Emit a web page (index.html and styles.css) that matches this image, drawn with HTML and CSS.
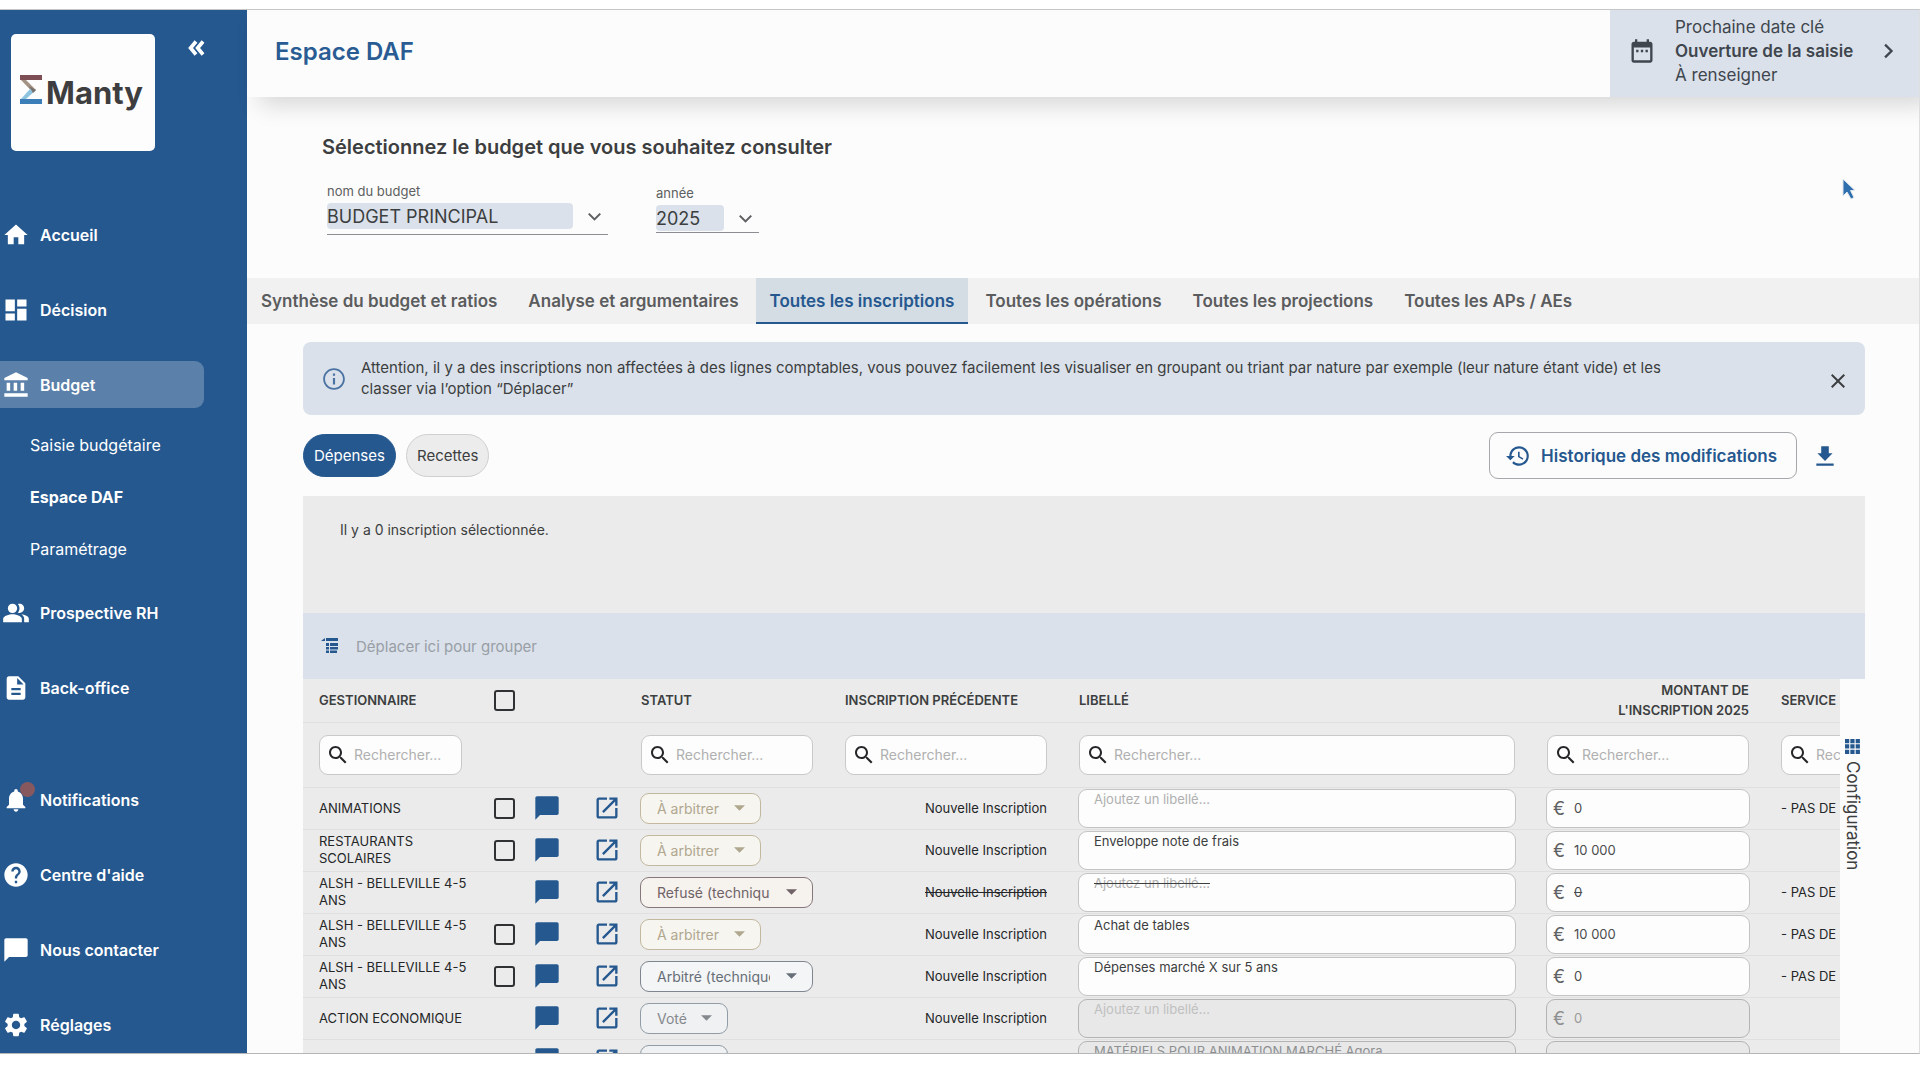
FILE: index.html
```html
<!DOCTYPE html>
<html lang="fr">
<head>
    <meta charset="UTF-8">
    <meta name="viewport" content="width=device-width, initial-scale=1.0">
    <title>Manty - Espace DAF</title>
    <link rel="stylesheet" href="styles.css">
</head>
<body>
    <!-- Icons -->
    <svg class="sprite" aria-hidden="true">
        <symbol id="i-home" viewBox="0 0 24 24"><path d="M10 20v-6h4v6h5v-8h3L12 3 2 12h3v8z"/></symbol>
        <symbol id="i-dashboard" viewBox="0 0 24 24"><path d="M3 13h8V3H3v10zm0 8h8v-6H3v6zm10 0h8V11h-8v10zm0-18v6h8V3h-8z"/></symbol>
        <symbol id="i-bank" viewBox="0 0 24 24"><path d="M4 10v7h3v-7H4zm6 0v7h3v-7h-3zM2 22h20v-3H2v3zm14-12v7h3v-7h-3zM12 1L2 6v2h20V6L12 1z"/></symbol>
        <symbol id="i-people" viewBox="0 0 24 24"><path d="M16.67 13.13C18.04 14.06 19 15.32 19 17v3h4v-3c0-2.18-3.57-3.47-6.33-3.87zM15 12c2.21 0 4-1.79 4-4s-1.79-4-4-4c-.47 0-.91.1-1.33.24C14.5 5.27 15 6.58 15 8s-.5 2.73-1.33 3.76c.42.14.86.24 1.33.24zM9 12a4 4 0 1 0 0-8 4 4 0 0 0 0 8zM9 13c-2.67 0-8 1.34-8 4v3h16v-3c0-2.66-5.33-4-8-4z"/></symbol>
        <symbol id="i-file" viewBox="0 0 24 24"><path d="M14 2H6c-1.1 0-1.99.9-1.99 2L4 20c0 1.1.89 2 1.99 2H18c1.1 0 2-.9 2-2V8l-6-6zm2 16H8v-2h8v2zm0-4H8v-2h8v2zm-3-5V3.5L18.5 9H13z"/></symbol>
        <symbol id="i-bell" viewBox="0 0 24 24"><path d="M12 22c1.1 0 2-.9 2-2h-4c0 1.1.89 2 2 2zm6-6v-5c0-3.07-1.64-5.64-4.5-6.32V4c0-.83-.67-1.5-1.5-1.5s-1.5.67-1.5 1.5v.68C7.63 5.36 6 7.92 6 11v5l-2 2v1h16v-1l-2-2z"/></symbol>
        <symbol id="i-help" viewBox="0 0 24 24"><path d="M12 2C6.48 2 2 6.48 2 12s4.48 10 10 10 10-4.48 10-10S17.52 2 12 2zm1 17h-2v-2h2v2zm2.07-7.75l-.9.92C13.45 12.9 13 13.5 13 15h-2v-.5c0-1.1.45-2.1 1.17-2.83l1.24-1.26c.37-.36.59-.86.59-1.41 0-1.1-.9-2-2-2s-2 .9-2 2H8c0-2.21 1.79-4 4-4s4 1.79 4 4c0 .88-.36 1.68-.93 2.25z"/></symbol>
        <symbol id="i-chat" viewBox="0 0 24 24"><path d="M20.500 2H3.500c-.8 0-1.500.7-1.500 1.500V22l4-4h14.500c.8 0 1.500-.7 1.500-1.500v-13c0-.8-.7-1.500-1.500-1.500z"/></symbol>
        <symbol id="i-settings" viewBox="0 0 24 24"><path d="M19.140 12.940c.04-.3.06-.61.06-.94 0-.32-.02-.64-.07-.94l2.030-1.580c.18-.14.23-.41.12-.61l-1.920-3.320c-.12-.22-.37-.29-.59-.22l-2.390.96c-.5-.38-1.030-.7-1.620-.94l-.36-2.540c-.04-.24-.24-.41-.48-.41h-3.840c-.24 0-.43.17-.47.41l-.36 2.540c-.59.24-1.130.57-1.620.94l-2.390-.96c-.22-.08-.47 0-.59.22L2.740 8.870c-.12.21-.08.47.12.61l2.030 1.580c-.05.3-.09.63-.09.94s.02.64.07.94l-2.030 1.580c-.18.14-.23.41-.12.61l1.920 3.320c.12.22.37.29.59.22l2.390-.96c.5.38 1.030.7 1.620.94l.36 2.540c.05.24.24.41.48.41h3.840c.24 0 .44-.17.47-.41l.36-2.540c.59-.24 1.130-.56 1.620-.94l2.390.96c.22.08.47 0 .59-.22l1.920-3.320c.12-.22.07-.47-.12-.61l-2.010-1.580zM12 15.600c-1.980 0-3.600-1.620-3.600-3.600s1.620-3.600 3.600-3.600 3.600 1.620 3.600 3.600-1.620 3.600-3.600 3.600z"/></symbol>
        <symbol id="i-open" viewBox="0 0 24 24"><path d="M19 19H5V5h7V3H5c-1.110 0-2 .9-2 2v14c0 1.100.89 2 2 2h14c1.100 0 2-.9 2-2v-7h-2v7zM14 3v2h3.590l-9.830 9.830 1.410 1.410L19 6.410V10h2V3h-7z"/></symbol>
        <symbol id="i-search" viewBox="0 0 24 24"><path d="M15.500 14h-.79l-.28-.27C15.410 12.590 16 11.110 16 9.500 16 5.910 13.090 3 9.500 3S3 5.910 3 9.500 5.910 16 9.500 16c1.610 0 3.090-.59 4.230-1.570l.27.28v.79l5 4.990L20.490 19l-4.990-5zm-6 0C7.010 14 5 11.990 5 9.500S7.010 5 9.500 5 14 7.010 14 9.500 11.990 14 9.500 14z"/></symbol>
        <symbol id="i-info" viewBox="0 0 24 24"><path d="M11 7h2v2h-2zm0 4h2v6h-2zm1-9C6.480 2 2 6.480 2 12s4.480 10 10 10 10-4.480 10-10S17.520 2 12 2zm0 18.300c-4.580 0-8.300-3.720-8.300-8.300S7.420 3.700 12 3.700s8.300 3.720 8.300 8.300-3.720 8.300-8.300 8.300z"/></symbol>
        <symbol id="i-close" viewBox="0 0 24 24"><path d="M19 6.410L17.590 5 12 10.590 6.410 5 5 6.410 10.590 12 5 17.590 6.410 19 12 13.410 17.590 19 19 17.590 13.410 12z"/></symbol>
        <symbol id="i-history" viewBox="0 0 24 24"><path d="M13 3c-4.970 0-9 4.030-9 9H1l3.890 3.890.07.14L9 12H6c0-3.870 3.130-7 7-7s7 3.130 7 7-3.130 7-7 7c-1.930 0-3.680-.79-4.940-2.060l-1.420 1.420C8.270 19.990 10.510 21 13 21c4.970 0 9-4.030 9-9s-4.030-9-9-9zm-1 5v5l4.280 2.540.72-1.210-3.500-2.080V8H12z"/></symbol>
        <symbol id="i-download" viewBox="0 0 24 24"><path d="M19 9.500h-3.500V3h-7v6.500H5l7 7 7-7zM4 19v2h16v-2H4z"/></symbol>
        <symbol id="i-calendar" viewBox="0 0 24 24"><path d="M19 4h-1V2h-2v2H8V2H6v2H5c-1.110 0-2 .9-2 2v14c0 1.100.89 2 2 2h14c1.100 0 2-.9 2-2V6c0-1.100-.9-2-2-2zm0 16H5V9h14v11zM7 11h2v2H7zm4 0h2v2h-2zm4 0h2v2h-2z"/></symbol>
        <symbol id="i-down" viewBox="0 0 24 24"><path d="M6 9l6 6 6-6" fill="none" stroke="currentColor" stroke-width="2.200"/></symbol>
        <symbol id="i-right" viewBox="0 0 24 24"><path d="M9.500 6.500L15 12l-5.500 5.500" fill="none" stroke="currentColor" stroke-width="2"/></symbol>
        <symbol id="i-collapse" viewBox="0 0 24 24"><path d="M12 6l-5 6 5 6M18.500 6l-5 6 5 6" fill="none" stroke="currentColor" stroke-width="3.400"/></symbol>
        <symbol id="i-caret" viewBox="0 0 12 6"><path d="M0 0h12L6 6z"/></symbol>
        <symbol id="i-group" viewBox="0 0 18 16"><path d="M0 3l4-3v3zM5 0h12v3H5zM5 5h3v3H5zM9 5h8v3H9zM5 9h3v2.500H5zM9 9h8v2.500H9zM5 12.500h3V15H5zM9 12.500h7V15H9z"/></symbol>
        <symbol id="i-grid" viewBox="0 0 16 16"><path d="M0 0h4.500v4.500H0zM5.700 0h4.500v4.500H5.700zM11.400 0h4.500v4.500h-4.500zM0 5.700h4.500v4.500H0zM5.700 5.700h4.500v4.500H5.700zM11.400 5.700h4.500v4.500h-4.500zM0 11.400h4.500v4.500H0zM5.700 11.400h4.500v4.500H5.700zM11.400 11.400h4.500v4.500h-4.500z"/></symbol>
    </svg>

    <div class="app">
        <aside class="sidebar">
            <div class="sidebar-top">
                <a class="logo" href="#">
                    <svg class="logo-mark" viewBox="0 0 22 30">
                        <path d="M0 0h22v5H0z" fill="#7d4f55"/>
                        <path d="M1 5h5l10 10-3 2.500z" fill="#a39384"/>
                        <path d="M16 15L6 24H1l9-10z" fill="#8fc4e0"/>
                        <path d="M9 11l7 4-3 3z" fill="#77706c"/>
                        <path d="M0 24h22v5H0z" fill="#3c7fb8"/>
                    </svg>
                    <span>Manty</span>
                </a>
                <button class="collapse" aria-label="Réduire le menu"><svg><use href="#i-collapse"/></svg></button>
            </div>
            <nav class="menu">
                <a class="menu-item" href="#"><svg><use href="#i-home"/></svg>Accueil</a>
                <a class="menu-item" href="#"><svg><use href="#i-dashboard"/></svg>Décision</a>
                <a class="menu-item active" href="#"><svg><use href="#i-bank"/></svg>Budget</a>
                <div class="submenu">
                    <a href="#">Saisie budgétaire</a>
                    <a class="current" href="#">Espace DAF</a>
                    <a href="#">Paramétrage</a>
                </div>
                <a class="menu-item" href="#"><svg><use href="#i-people"/></svg>Prospective RH</a>
                <a class="menu-item" href="#"><svg><use href="#i-file"/></svg>Back-office</a>
            </nav>
            <nav class="menu menu-bottom">
                <a class="menu-item" href="#"><svg><use href="#i-bell"/></svg><span class="badge"></span>Notifications</a>
                <a class="menu-item" href="#"><svg><use href="#i-help"/></svg>Centre d'aide</a>
                <a class="menu-item" href="#"><svg><use href="#i-chat"/></svg>Nous contacter</a>
                <a class="menu-item" href="#"><svg><use href="#i-settings"/></svg>Réglages</a>
            </nav>
        </aside>

        <main class="main">
            <header class="header">
                <h1>Espace DAF</h1>
                <a class="key-date" href="#">
                    <svg><use href="#i-calendar"/></svg>
                    <span class="key-date-text">
                        <span>Prochaine date clé</span>
                        <strong>Ouverture de la saisie</strong>
                        <span>À renseigner</span>
                    </span>
                    <svg><use href="#i-right"/></svg>
                </a>
            </header>

            <section class="budget">
                <h2>Sélectionnez le budget que vous souhaitez consulter</h2>
                <div class="fields">
                    <div class="field">
                        <label for="budget">nom du budget</label>
                        <div class="field-control">
                            <select id="budget"><option>BUDGET PRINCIPAL</option></select>
                            <svg><use href="#i-down"/></svg>
                        </div>
                    </div>
                    <div class="field field-year">
                        <label for="year">année</label>
                        <div class="field-control">
                            <select id="year"><option>2025</option></select>
                            <svg><use href="#i-down"/></svg>
                        </div>
                    </div>
                </div>
            </section>

            <nav class="tabs">
                <a href="#">Synthèse du budget et ratios</a>
                <a href="#">Analyse et argumentaires</a>
                <a class="active" href="#">Toutes les inscriptions</a>
                <a href="#">Toutes les opérations</a>
                <a href="#">Toutes les projections</a>
                <a href="#">Toutes les APs / AEs</a>
            </nav>

            <section class="content">
                <div class="alert">
                    <svg class="alert-icon"><use href="#i-info"/></svg>
                    <p>Attention, il y a des inscriptions non affectées à des lignes comptables, vous pouvez facilement les visualiser en groupant ou triant par nature par exemple (leur nature étant vide) et les classer via l’option “Déplacer”</p>
                    <button class="alert-close" aria-label="Fermer"><svg><use href="#i-close"/></svg></button>
                </div>

                <div class="toolbar">
                    <button class="pill selected">Dépenses</button>
                    <button class="pill">Recettes</button>
                    <button class="history"><svg><use href="#i-history"/></svg>Historique des modifications</button>
                    <button class="download" aria-label="Télécharger"><svg><use href="#i-download"/></svg></button>
                </div>

                <p class="selection">Il y a 0 inscription sélectionnée.</p>
                <div class="group-bar"><svg><use href="#i-group"/></svg>Déplacer ici pour grouper</div>

                <div class="grid">
                    <div class="grid-table">
                        <table>
                            <colgroup>
                                <col class="c-manager"><col class="c-check"><col class="c-chat"><col class="c-open"><col class="c-status">
                                <col class="c-previous"><col class="c-label"><col class="c-amount"><col class="c-service">
                            </colgroup>
                            <thead>
                                <tr class="titles">
                                    <th>GESTIONNAIRE</th>
                                    <th class="check"><input type="checkbox" aria-label="Tout sélectionner"></th>
                                    <th></th>
                                    <th></th>
                                    <th>STATUT</th>
                                    <th>INSCRIPTION PRÉCÉDENTE</th>
                                    <th>LIBELLÉ</th>
                                    <th class="right">MONTANT DE<br>L'INSCRIPTION 2025</th>
                                    <th>SERVICE</th>
                                </tr>
                                <tr class="filters">
                                    <td><label class="search"><svg><use href="#i-search"/></svg><input type="text" placeholder="Rechercher..." aria-label="Gestionnaire"></label></td>
                                    <td></td>
                                    <td></td>
                                    <td></td>
                                    <td><label class="search"><svg><use href="#i-search"/></svg><input type="text" placeholder="Rechercher..." aria-label="Statut"></label></td>
                                    <td><label class="search"><svg><use href="#i-search"/></svg><input type="text" placeholder="Rechercher..." aria-label="Inscription précédente"></label></td>
                                    <td><label class="search"><svg><use href="#i-search"/></svg><input type="text" placeholder="Rechercher..." aria-label="Libellé"></label></td>
                                    <td><label class="search"><svg><use href="#i-search"/></svg><input type="text" placeholder="Rechercher..." aria-label="Montant"></label></td>
                                    <td><label class="search"><svg><use href="#i-search"/></svg><input type="text" placeholder="Rechercher..." aria-label="Service"></label></td>
                                </tr>
                            </thead>
                            <tbody>
                                <tr>
                                    <td>ANIMATIONS</td>
                                    <td class="check"><input type="checkbox" aria-label="Sélectionner"></td>
                                    <td class="icon"><button aria-label="Commentaires"><svg><use href="#i-chat"/></svg></button></td>
                                    <td class="icon icon-open"><button aria-label="Ouvrir"><svg><use href="#i-open"/></svg></button></td>
                                    <td class="status-cell"><div class="status pending"><select aria-label="Statut"><option>À arbitrer</option></select><svg><use href="#i-caret"/></svg></div></td>
                                    <td class="right">Nouvelle Inscription</td>
                                    <td class="box-cell"><textarea class="box" rows="1" placeholder="Ajoutez un libellé..." aria-label="Libellé"></textarea></td>
                                    <td class="box-cell"><label class="box amount">€<input type="text" value="0"></label></td>
                                    <td>- PAS DE SERVICE -</td>
                                </tr>
                                <tr>
                                    <td>RESTAURANTS SCOLAIRES</td>
                                    <td class="check"><input type="checkbox" aria-label="Sélectionner"></td>
                                    <td class="icon"><button aria-label="Commentaires"><svg><use href="#i-chat"/></svg></button></td>
                                    <td class="icon icon-open"><button aria-label="Ouvrir"><svg><use href="#i-open"/></svg></button></td>
                                    <td class="status-cell"><div class="status pending"><select aria-label="Statut"><option>À arbitrer</option></select><svg><use href="#i-caret"/></svg></div></td>
                                    <td class="right">Nouvelle Inscription</td>
                                    <td class="box-cell"><textarea class="box" rows="1" aria-label="Libellé">Enveloppe note de frais</textarea></td>
                                    <td class="box-cell"><label class="box amount">€<input type="text" value="10 000"></label></td>
                                    <td></td>
                                </tr>
                                <tr class="refused">
                                    <td>ALSH - BELLEVILLE 4-5 ANS</td>
                                    <td></td>
                                    <td class="icon"><button aria-label="Commentaires"><svg><use href="#i-chat"/></svg></button></td>
                                    <td class="icon icon-open"><button aria-label="Ouvrir"><svg><use href="#i-open"/></svg></button></td>
                                    <td class="status-cell"><div class="status rejected"><select aria-label="Statut"><option>Refusé (technique)</option></select><svg><use href="#i-caret"/></svg></div></td>
                                    <td class="right">Nouvelle Inscription</td>
                                    <td class="box-cell"><textarea class="box" rows="1" placeholder="Ajoutez un libellé..." aria-label="Libellé"></textarea></td>
                                    <td class="box-cell"><label class="box amount">€<input type="text" value="0"></label></td>
                                    <td>- PAS DE SERVICE -</td>
                                </tr>
                                <tr>
                                    <td>ALSH - BELLEVILLE 4-5 ANS</td>
                                    <td class="check"><input type="checkbox" aria-label="Sélectionner"></td>
                                    <td class="icon"><button aria-label="Commentaires"><svg><use href="#i-chat"/></svg></button></td>
                                    <td class="icon icon-open"><button aria-label="Ouvrir"><svg><use href="#i-open"/></svg></button></td>
                                    <td class="status-cell"><div class="status pending"><select aria-label="Statut"><option>À arbitrer</option></select><svg><use href="#i-caret"/></svg></div></td>
                                    <td class="right">Nouvelle Inscription</td>
                                    <td class="box-cell"><textarea class="box" rows="1" aria-label="Libellé">Achat de tables</textarea></td>
                                    <td class="box-cell"><label class="box amount">€<input type="text" value="10 000"></label></td>
                                    <td>- PAS DE SERVICE -</td>
                                </tr>
                                <tr>
                                    <td>ALSH - BELLEVILLE 4-5 ANS</td>
                                    <td class="check"><input type="checkbox" aria-label="Sélectionner"></td>
                                    <td class="icon"><button aria-label="Commentaires"><svg><use href="#i-chat"/></svg></button></td>
                                    <td class="icon icon-open"><button aria-label="Ouvrir"><svg><use href="#i-open"/></svg></button></td>
                                    <td class="status-cell"><div class="status approved"><select aria-label="Statut"><option>Arbitré (technique)</option></select><svg><use href="#i-caret"/></svg></div></td>
                                    <td class="right">Nouvelle Inscription</td>
                                    <td class="box-cell"><textarea class="box" rows="1" aria-label="Libellé">Dépenses marché X sur 5 ans</textarea></td>
                                    <td class="box-cell"><label class="box amount">€<input type="text" value="0"></label></td>
                                    <td>- PAS DE SERVICE -</td>
                                </tr>
                                <tr>
                                    <td>ACTION ECONOMIQUE</td>
                                    <td></td>
                                    <td class="icon"><button aria-label="Commentaires"><svg><use href="#i-chat"/></svg></button></td>
                                    <td class="icon icon-open"><button aria-label="Ouvrir"><svg><use href="#i-open"/></svg></button></td>
                                    <td class="status-cell"><div class="status voted"><select aria-label="Statut"><option>Voté</option></select><svg><use href="#i-caret"/></svg></div></td>
                                    <td class="right">Nouvelle Inscription</td>
                                    <td class="box-cell"><textarea class="box locked" rows="1" placeholder="Ajoutez un libellé..." aria-label="Libellé" readonly></textarea></td>
                                    <td class="box-cell"><label class="box locked amount">€<input type="text" value="0" readonly></label></td>
                                    <td></td>
                                </tr>
                                <tr>
                                    <td></td>
                                    <td></td>
                                    <td class="icon"><button aria-label="Commentaires"><svg><use href="#i-chat"/></svg></button></td>
                                    <td class="icon icon-open"><button aria-label="Ouvrir"><svg><use href="#i-open"/></svg></button></td>
                                    <td class="status-cell"><div class="status voted"><select aria-label="Statut"><option></option></select><svg><use href="#i-caret"/></svg></div></td>
                                    <td></td>
                                    <td class="box-cell"><textarea class="box locked" rows="1" aria-label="Libellé" readonly>MATÉRIELS POUR ANIMATION MARCHÉ Agora</textarea></td>
                                    <td class="box-cell"><label class="box locked amount"><input type="text" readonly></label></td>
                                    <td></td>
                                </tr>
                            </tbody>
                        </table>
                    </div>
                    <button class="config"><svg><use href="#i-grid"/></svg>Configuration</button>
                </div>
            </section>
        </main>
    </div>

    <svg class="cursor" viewBox="0 0 16 24"><path d="M2 2v17l4-4 4 7 3-1.500-3.500-7H14z" fill="#2f6fae" stroke="#dfe6ed" stroke-width="1"/></svg>
</body>
</html>
```

FILE: styles.css
```css
* {
    box-sizing: border-box;
}
body {
    margin: 0;
    background: #fff;
    color: #3c3e40;
    font-family: Inter, "Open Sans", sans-serif;
    font-size: 14px;
    overflow: hidden;
}
h1, h2, p {
    margin: 0;
}
a {
    color: inherit;
    text-decoration: none;
}
button, select, input, textarea {
    font: inherit;
    color: inherit;
    margin: 0;
}
button {
    padding: 0;
    border: none;
    background: none;
    cursor: pointer;
}
select {
    appearance: none;
    border: none;
    background: none;
}
svg {
    display: block;
    flex: none;
    width: 28px;
    height: 28px;
    fill: currentColor;
}
.sprite {
    display: none;
}
.app {
    display: flex;
    height: calc(100vh - 35px);
    margin-top: 9px;
    border-top: 1px solid #c4c6c8;
    border-bottom: 1px solid #b4b6b8;
    border-right: 1px solid #dcdedf;
    background: #fcfcfc;
    overflow: hidden;
}

/* Sidebar */
.sidebar {
    flex: none;
    width: 247px;
    background: #25588f;
    color: #fff;
}
.sidebar-top {
    display: flex;
    justify-content: space-between;
    align-items: flex-start;
    padding: 24px 38px 0 11px;
    margin-bottom: 60px;
}
.logo {
    display: flex;
    align-items: center;
    gap: 4px;
    width: 144px;
    height: 117px;
    padding-left: 9px;
    border-radius: 5px;
    background: #fdfdfd;
    color: #3e3e40;
    font-size: 31px;
    font-weight: 700;
}
.logo-mark {
    width: 22px;
    height: 30px;
    margin-bottom: 6px;
}
.collapse svg {
    width: 26px;
    height: 28px;
}
.menu {
    display: flex;
    flex-direction: column;
    gap: 28px;
}
.menu-bottom {
    margin-top: 65px;
}
.menu-item {
    position: relative;
    display: flex;
    align-items: center;
    gap: 10px;
    width: 204px;
    height: 47px;
    padding-left: 2px;
    font-size: 16px;
    font-weight: 600;
}
.menu-item.active {
    border-radius: 0 9px 9px 0;
    background: #5b80a9;
}
.badge {
    position: absolute;
    left: 20px;
    top: 6px;
    width: 15px;
    height: 15px;
    border-radius: 50%;
    background: #87595f;
}
.submenu {
    display: flex;
    flex-direction: column;
    margin: -17px 0 -14px;
    padding-left: 30px;
    font-size: 16px;
    line-height: 52px;
}
.submenu .current {
    font-weight: 700;
}

/* Header */
.main {
    flex: 1;
    display: flex;
    flex-direction: column;
    min-width: 0;
}
.header {
    display: flex;
    flex: none;
    justify-content: space-between;
    align-items: center;
    height: 87px;
    padding-left: 28px;
    box-shadow: 12px 8px 22px rgba(0, 0, 0, 0.15);
}
h1 {
    color: #2a5c94;
    font-size: 24px;
    font-weight: 600;
    padding-bottom: 5px;
}
.key-date {
    display: flex;
    align-items: center;
    width: 309px;
    height: 87px;
    padding: 0 17px 6px 18px;
    background: #dae1ea;
    color: #3f464e;
    font-size: 17px;
    line-height: 24px;
}
.key-date-text {
    flex: 1;
    display: flex;
    flex-direction: column;
    padding-left: 19px;
    white-space: nowrap;
}
.key-date strong {
    font-weight: 600;
}

/* Budget choice */
.budget {
    padding: 35px 75px 43px;
}
h2 {
    font-size: 20px;
    font-weight: 600;
    line-height: 30px;
}
.fields {
    display: flex;
    align-items: center;
    gap: 48px;
    padding: 20px 5px 0;
}
.field label {
    display: block;
    font-size: 13px;
    line-height: 18px;
    padding-bottom: 3px;
    color: #5d5f61;
}
.field-control {
    display: flex;
    align-items: center;
    gap: 10px;
    padding: 0 2px 5px 0;
    border-bottom: 1px solid #8b8d90;
}
.field-year .field-control {
    padding-bottom: 1px;
}
.field select {
    width: 246px;
    height: 26px;
    border-radius: 4px;
    background: #dae1ea;
    font-size: 18px;
}
.field-year select {
    width: 68px;
}
.field svg {
    width: 23px;
    height: 23px;
    color: #5d5f61;
}

/* Tabs */
.tabs {
    display: flex;
    flex: none;
    gap: 3px;
    height: 46px;
    background: #f1f1f1;
    color: #5b5c5e;
    font-size: 17px;
    font-weight: 600;
    line-height: 46px;
    white-space: nowrap;
}
.tabs a {
    padding: 0 14px;
}
.tabs .active {
    border-bottom: 2px solid #25588f;
    background: #d4dce4;
    color: #25588f;
}

/* Content */
.content {
    display: flex;
    flex: 1;
    flex-direction: column;
    min-height: 0;
    padding: 18px 54px 0 56px;
}
.alert {
    display: flex;
    flex: none;
    align-items: center;
    height: 73px;
    padding: 0 15px 0 18px;
    border-radius: 8px;
    background: #dae1ea;
}
.alert-icon {
    width: 26px;
    height: 26px;
    color: #4a73a3;
}
.alert p {
    flex: 1;
    padding: 0 130px 2px 14px;
    font-size: 15px;
    line-height: 21px;
}
.alert-close {
    padding-top: 4px;
}
.alert-close svg {
    width: 24px;
    height: 24px;
}
.toolbar {
    display: flex;
    flex: none;
    align-items: center;
    gap: 10px;
    padding: 17px 27px 17px 0;
}
.pill {
    height: 43px;
    padding: 0 10px;
    border: 1px solid #cfcfcf;
    border-radius: 22px;
    background: #ececec;
    font-size: 15px;
}
.pill.selected {
    border-color: #25588f;
    background: #25588f;
    color: #fff;
}
.history {
    display: flex;
    align-items: center;
    gap: 10px;
    height: 47px;
    margin-left: auto;
    padding: 0 19px 0 15px;
    border: 1px solid #a5a7aa;
    border-radius: 9px;
    color: #25588f;
    font-size: 17px;
    font-weight: 600;
}
.download {
    padding-left: 5px;
    color: #25588f;
}
.download svg, .history svg {
    width: 26px;
    height: 26px;
}
.selection {
    flex: none;
    height: 117px;
    padding: 24px 37px;
    background: #ebebeb;
    line-height: 20px;
}
.group-bar {
    display: flex;
    flex: none;
    align-items: center;
    gap: 17px;
    height: 66px;
    padding-left: 18px;
    background: #dae1ea;
    color: #989ea6;
    font-size: 15px;
}
.group-bar svg {
    width: 18px;
    height: 16px;
    color: #25588f;
}

/* Data grid */
.grid {
    display: flex;
    flex: 1;
    min-height: 0;
}
.grid-table {
    flex: 1;
    min-width: 0;
    overflow: hidden;
    background: #ebebeb;
}
table {
    width: 1665px;
    table-layout: fixed;
    border-collapse: collapse;
    font-size: 13px;
    line-height: 17px;
}
.c-manager { width: 175px; }
.c-check { width: 54px; }
.c-chat { width: 57px; }
.c-open { width: 51px; }
.c-status { width: 189px; }
.c-previous { width: 234px; }
.c-label { width: 468px; }
.c-amount { width: 234px; }
.c-service { width: 203px; }
th, td {
    height: 42px;
    padding: 0 16px;
    border-bottom: 1px solid #e0e0e0;
    text-align: left;
}
th {
    height: 43px;
    font-weight: 600;
    line-height: 20px;
}
td {
    color: #242628;
}
tbody td:first-child {
    padding-right: 6px;
}
.right {
    text-align: right;
}
.filters td {
    height: 65px;
}
.titles th:nth-child(5), .filters td:nth-child(5) {
    padding: 0 16px 0 1px;
}
.status-cell {
    padding: 0;
}
.check {
    padding: 0 0 0 16px;
}
.check input {
    display: block;
    appearance: none;
    width: 21px;
    height: 21px;
    border: 2px solid #2f3133;
    border-radius: 3px;
}
.icon {
    padding: 0 0 0 1px;
    color: #25588f;
}
.icon-open {
    padding-left: 4px;
}
.icon button {
    display: block;
}
.search {
    display: flex;
    align-items: center;
    gap: 4px;
    height: 40px;
    padding: 0 6px;
    border: 1px solid #c9c9c9;
    border-radius: 9px;
    background: #fdfdfd;
}
.search svg {
    width: 24px;
    height: 24px;
}
.search input {
    min-width: 0;
    width: 100%;
    padding: 0;
    border: none;
    background: none;
    font-size: 14px;
}
::placeholder {
    color: #b0b0b0;
    opacity: 1;
}
.status {
    display: flex;
    align-items: center;
    width: 121px;
    height: 31px;
    padding: 0 15px 0 16px;
    border: 1px solid #c2b89f;
    border-radius: 9px;
    background: #f7f5f0;
    color: #b0a78f;
}
.status select {
    flex: 1;
    min-width: 0;
    height: 24px;
    padding: 0;
    font-size: 14px;
    text-overflow: clip;
}
.status svg {
    width: 11px;
    height: 6px;
}
.status.rejected {
    width: 173px;
    border-color: #85777a;
    background: #f6f2ee;
    color: #6f6367;
}
.status.rejected select, .status.approved select {
    margin-right: 16px;
}
.status.approved {
    width: 173px;
    border-color: #7f868f;
    background: #f3f5f6;
    color: #666e77;
}
.status.voted {
    width: 88px;
    border-color: #929ca6;
    background: #f0f1f2;
    color: #85898e;
}
.box-cell {
    padding: 0 15px;
}
.box {
    display: block;
    width: 100%;
    height: 39px;
    padding: 1px 15px;
    border: 1px solid #c4c4c4;
    border-radius: 9px;
    background: #fdfdfd;
    color: #3c3e40;
    font-size: 13px;
    line-height: 17px;
    resize: none;
    overflow: hidden;
}
.box.amount {
    display: flex;
    align-items: center;
    gap: 9px;
    padding: 0 6px;
    color: #5f6163;
    font-size: 18px;
}
.amount input {
    min-width: 0;
    width: 100%;
    padding: 0;
    border: none;
    background: none;
    color: #4a4c4e;
    font-size: 13px;
}
.box.locked {
    border-color: #b4b4b4;
    background: #e8e8e8;
    color: #8d8f91;
}
.locked::placeholder {
    color: #c0c0c0;
}
.locked input {
    color: #999;
}
.refused .right, .refused textarea, .refused .amount input {
    text-decoration: line-through;
}
.config {
    display: flex;
    flex: none;
    align-items: center;
    gap: 7px;
    width: 25px;
    padding-top: 60px;
    writing-mode: vertical-rl;
    font-size: 17px;
}
.config svg {
    width: 15px;
    height: 15px;
    color: #25588f;
}

/* Pointer */
.cursor {
    position: absolute;
    left: 1841px;
    top: 177px;
    width: 16px;
    height: 24px;
}
```
